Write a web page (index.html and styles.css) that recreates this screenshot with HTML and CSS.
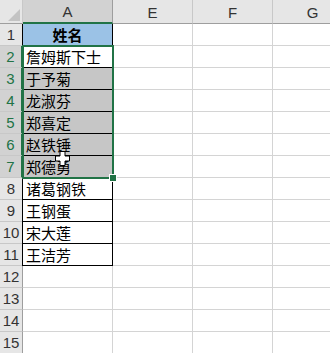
FILE: index.html
```html
<!DOCTYPE html>
<html>
<head>
<meta charset="utf-8">
<link rel="stylesheet" href="styles.css">
</head>
<body>
<div class="sheet">
  <div class="grid">
    <div class="corner"><span class="tri"></span></div>
    <div class="ch sel">A</div>
    <div class="ch hid">E</div>
    <div class="ch">F</div>
    <div class="ch">G</div>

    <div class="rh">1</div><div class="c a head">姓名</div><div class="c"></div><div class="c"></div><div class="c"></div>
    <div class="rh rs">2</div><div class="c a">詹姆斯下士</div><div class="c"></div><div class="c"></div><div class="c"></div>
    <div class="rh rs">3</div><div class="c a g">于予菊</div><div class="c"></div><div class="c"></div><div class="c"></div>
    <div class="rh rs">4</div><div class="c a g">龙淑芬</div><div class="c"></div><div class="c"></div><div class="c"></div>
    <div class="rh rs">5</div><div class="c a g">郑喜定</div><div class="c"></div><div class="c"></div><div class="c"></div>
    <div class="rh rs">6</div><div class="c a g">赵铁锤</div><div class="c"></div><div class="c"></div><div class="c"></div>
    <div class="rh rs">7</div><div class="c a g">郑德勇</div><div class="c"></div><div class="c"></div><div class="c"></div>
    <div class="rh">8</div><div class="c a">诸葛钢铁</div><div class="c"></div><div class="c"></div><div class="c"></div>
    <div class="rh">9</div><div class="c a">王钢蛋</div><div class="c"></div><div class="c"></div><div class="c"></div>
    <div class="rh">10</div><div class="c a">宋大莲</div><div class="c"></div><div class="c"></div><div class="c"></div>
    <div class="rh">11</div><div class="c a">王洁芳</div><div class="c"></div><div class="c"></div><div class="c"></div>
    <div class="rh">12</div><div class="c"></div><div class="c"></div><div class="c"></div><div class="c"></div>
    <div class="rh">13</div><div class="c"></div><div class="c"></div><div class="c"></div><div class="c"></div>
    <div class="rh">14</div><div class="c"></div><div class="c"></div><div class="c"></div><div class="c"></div>
    <div class="rh">15</div><div class="c"></div><div class="c"></div><div class="c"></div><div class="c"></div>
  </div>
  <div class="selection"><span class="handle"></span></div>
  <svg class="cursor" width="15" height="15" viewBox="0 0 15 15">
    <path d="M5 0.5 H10 V5 H14.5 V10 H10 V14.5 H5 V10 H0.5 V5 H5 Z" fill="#fff" stroke="#000" stroke-width="1"/>
  </svg>
</div>
</body>
</html>
```
FILE: styles.css
```css
html, body {
  margin: 0;
  padding: 0;
  background: #fff;
}
.sheet {
  position: relative;
  width: 330px;
  height: 353px;
  overflow: hidden;
}
.grid {
  display: grid;
  grid-template-columns: 23px 90px 80px 80px 80px;
  grid-template-rows: 24px repeat(15, 22px);
  font-family: "Liberation Sans", Arial, sans-serif;
}
.grid > div {
  box-sizing: border-box;
}
.corner {
  background: #e6e6e6;
  border-right: 1px solid #c8c8c8;
  border-bottom: 1px solid #9e9e9e;
  position: relative;
}
.tri {
  position: absolute;
  right: 2px;
  bottom: 2px;
  width: 0;
  height: 0;
  border-left: 12px solid transparent;
  border-bottom: 12px solid #c3c3c3;
}
.ch {
  background: #e6e6e6;
  border-right: 1px solid #c8c8c8;
  border-bottom: 1px solid #9e9e9e;
  color: #333;
  font-size: 15px;
  text-align: center;
  line-height: 25px;
}
.ch.sel {
  background: #d2d2d2;
  border-bottom: 2px solid #217346;
  border-right: 1px solid #9e9e9e;
  line-height: 24px;
}
.rh {
  background: #e6e6e6;
  border-right: 1px solid #9e9e9e;
  border-bottom: 1px solid #c8c8c8;
  color: #333;
  font-size: 15px;
  text-align: center;
  line-height: 22px;
}
.rh.rs {
  background: #d2d2d2;
  color: #217346;
  border-right: 2px solid #217346;
}
.c {
  border-right: 1px solid #d4d4d4;
  border-bottom: 1px solid #d4d4d4;
}
.c.a {
  border-right: 1px solid #000;
  border-bottom: 1px solid #000;
  box-shadow: -1px 0 0 #000;
  font-family: "Noto Sans CJK SC", "Liberation Sans", sans-serif;
  font-size: 15px;
  color: #000;
  line-height: 22px;
  padding-left: 3px;
  white-space: nowrap;
}
.c.head {
  background: #9bc2e6;
  font-weight: bold;
  text-align: center;
  padding-left: 0;
}
.c.g {
  background: #c6c6c6;
}
.selection {
  position: absolute;
  left: 22px;
  top: 45px;
  width: 92px;
  height: 134px;
  box-sizing: border-box;
  border: 2px solid #217346;
}
.handle {
  position: absolute;
  right: -5px;
  bottom: -5px;
  width: 6px;
  height: 6px;
  background: #217346;
  border: 1px solid #fff;
}
.cursor {
  position: absolute;
  left: 55px;
  top: 151px;
}
```
